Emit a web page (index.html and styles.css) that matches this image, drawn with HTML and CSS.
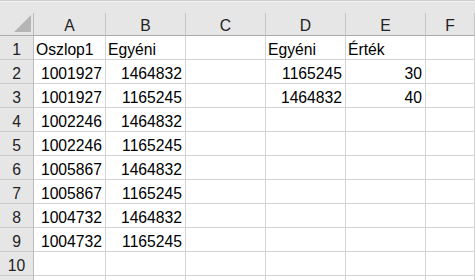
FILE: index.html
```html
<!DOCTYPE html>
<html>
<head>
<meta charset="utf-8">
<link rel="stylesheet" href="styles.css">
</head>
<body>
<div class="topbar"></div>
<div class="sheet">
  <div class="corner"><div class="tri"></div></div>
  <div class="ch">A</div><div class="ch">B</div><div class="ch">C</div><div class="ch">D</div><div class="ch">E</div><div class="ch">F</div>

  <div class="rh">1</div><div class="c">Oszlop1</div><div class="c">Egyéni</div><div class="c"></div><div class="c">Egyéni</div><div class="c">Érték</div><div class="c"></div>
  <div class="rh">2</div><div class="c n">1001927</div><div class="c n">1464832</div><div class="c"></div><div class="c n">1165245</div><div class="c n">30</div><div class="c"></div>
  <div class="rh">3</div><div class="c n">1001927</div><div class="c n">1165245</div><div class="c"></div><div class="c n">1464832</div><div class="c n">40</div><div class="c"></div>
  <div class="rh">4</div><div class="c n">1002246</div><div class="c n">1464832</div><div class="c"></div><div class="c"></div><div class="c"></div><div class="c"></div>
  <div class="rh">5</div><div class="c n">1002246</div><div class="c n">1165245</div><div class="c"></div><div class="c"></div><div class="c"></div><div class="c"></div>
  <div class="rh">6</div><div class="c n">1005867</div><div class="c n">1464832</div><div class="c"></div><div class="c"></div><div class="c"></div><div class="c"></div>
  <div class="rh">7</div><div class="c n">1005867</div><div class="c n">1165245</div><div class="c"></div><div class="c"></div><div class="c"></div><div class="c"></div>
  <div class="rh">8</div><div class="c n">1004732</div><div class="c n">1464832</div><div class="c"></div><div class="c"></div><div class="c"></div><div class="c"></div>
  <div class="rh">9</div><div class="c n">1004732</div><div class="c n">1165245</div><div class="c"></div><div class="c"></div><div class="c"></div><div class="c"></div>
  <div class="rh">10</div><div class="c"></div><div class="c"></div><div class="c"></div><div class="c"></div><div class="c"></div><div class="c"></div>
  <div class="rh last"></div><div class="c last"></div><div class="c last"></div><div class="c last"></div><div class="c last"></div><div class="c last"></div><div class="c last"></div>
</div>
</body>
</html>
```
FILE: styles.css
```css
html, body {
  margin: 0;
  padding: 0;
  background: #ffffff;
  overflow: hidden;
  height: 280px;
}
body {
  font-family: "Liberation Sans", Arial, sans-serif;
  font-size: 15.7px;
  color: #000;
}
.topbar {
  height: 13px;
  box-sizing: border-box;
  background: #e6e6e6;
  border-top: 1px solid #cfcfcf;
  box-shadow: inset 0 1px 0 #f3f3f3;
}
.sheet {
  display: grid;
  grid-template-columns: 34px 72px 80px 80px 80px 80px 1fr;
  grid-template-rows: 23px repeat(10, 24px) 4px;
}
.sheet > div {
  box-sizing: border-box;
  line-height: 18px;
  display: flex;
  align-items: flex-end;
  white-space: nowrap;
  overflow: hidden;
}
.sheet > div.last {
  border-bottom: none;
}
.corner {
  background: #e6e6e6;
  border-right: 1px solid #bcbcbc;
  border-bottom: 1px solid #ababab;
  justify-content: flex-end;
  padding: 0 2px 3px 0;
}
.tri {
  width: 17px;
  height: 17px;
  background: #b5b5b5;
  clip-path: polygon(100% 0, 100% 100%, 0 100%);
}
.ch {
  background: #e6e6e6;
  border-right: 1px solid #c6c6c6;
  border-bottom: 1px solid #ababab;
  justify-content: center;
  color: #222;
}
.rh {
  background: #e6e6e6;
  border-right: 1px solid #bcbcbc;
  border-bottom: 1px solid #cbcbcb;
  justify-content: center;
  color: #222;
}
.c {
  border-right: 1px solid #d4d4d4;
  border-bottom: 1px solid #d4d4d4;
  padding: 0 3px 0 2px;
}
.c.n {
  justify-content: flex-end;
}
```
